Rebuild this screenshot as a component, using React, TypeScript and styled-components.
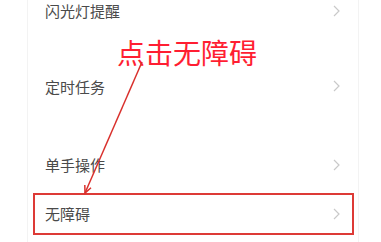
import React from "react";
import styled, { createGlobalStyle } from "styled-components";

const Global = createGlobalStyle`
  html, body { margin: 0; padding: 0; background: #ffffff; }
  body { width: 381px; height: 242px; overflow: hidden; font-family: "Noto Sans CJK SC", "Noto Sans", sans-serif; }
`;

const Page = styled.div`
  position: relative;
  width: 381px;
  height: 242px;
  overflow: hidden;
  background: #ffffff;
`;

const Card = styled.div`
  display: flex;
  flex-direction: column;
  margin: 0 22px 0 27px;
  height: 242px;
  border-left: 1px solid #f3f3f3;
  border-right: 1px solid #f3f3f3;
`;

const Row = styled.div<{ $top: number; $highlight?: boolean }>`
  display: flex;
  align-items: center;
  justify-content: space-between;
  flex-shrink: 0;
  height: 42px;
  margin: ${(p) => p.$top}px 4px 0 5px;
  padding: 0 14px 0 12px;
  box-shadow: ${(p) => (p.$highlight ? "inset 0 0 0 2px #dd3a36" : "none")};
`;

const Label = styled.span`
  font-size: 15px;
  line-height: 1;
  font-weight: 400;
  color: #4a4a4a;
`;

const Chevron = styled.svg`
  width: 7px;
  height: 12px;
  flex-shrink: 0;
`;

const Callout = styled.div`
  position: absolute;
  left: 117px;
  top: 38px;
  font-size: 28px;
  line-height: 1;
  color: #ff1e32;
  white-space: nowrap;
`;

const Arrow = styled.svg`
  position: absolute;
  left: 0;
  top: 0;
  width: 381px;
  height: 242px;
  pointer-events: none;
`;

const rows = [
  { label: "闪光灯提醒", top: -10.5 },
  { label: "定时任务", top: 33.5 },
  { label: "单手操作", top: 36.5 },
  { label: "无障碍", top: 7, highlight: true },
];

export default function App() {
  return (
    <Page>
      <Global />
      <Card>
        {rows.map((r) => (
          <Row key={r.label} $top={r.top} $highlight={r.highlight}>
            <Label>{r.label}</Label>
            <Chevron viewBox="0 0 7 12">
              <polyline points="1,1 6,6 1,11" fill="none" stroke="#c9c9c9" strokeWidth="1.2" />
            </Chevron>
          </Row>
        ))}
      </Card>
      <Callout>点击无障碍</Callout>
      <Arrow viewBox="0 0 381 242">
        <line x1="142" y1="62" x2="85" y2="193" stroke="#d9302c" strokeWidth="1.5" />
        <polyline points="91,187.7 85,193 84.8,185" fill="none" stroke="#d9302c" strokeWidth="1.5" />
      </Arrow>
    </Page>
  );
}
